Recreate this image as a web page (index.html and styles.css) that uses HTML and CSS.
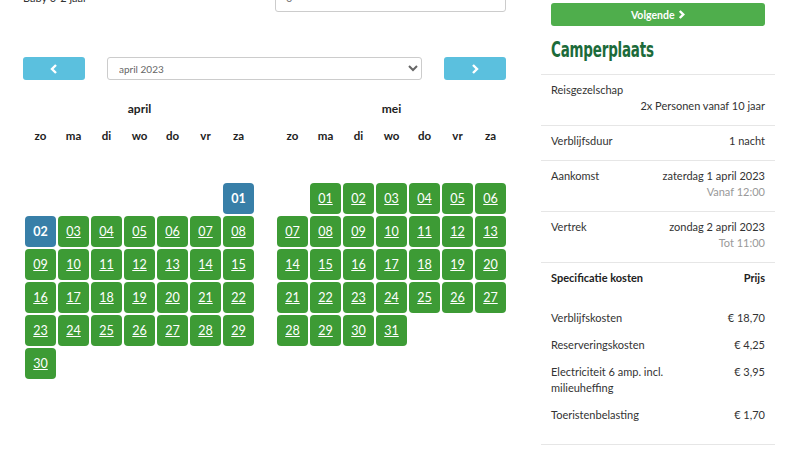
FILE: index.html
```html
<!DOCTYPE html>
<html lang="nl">
<head>
  <meta charset="UTF-8">
  <meta name="viewport" content="width=device-width, initial-scale=1.0">
  <title>Camperplaats reserveren</title>
  <link rel="stylesheet" href="styles.css">
</head>
<body>

  <div class="pagina">
    <main class="links">
      <div class="veld-rij">
        <label for="baby">Baby 0-2 jaar</label>
        <input type="text" id="baby" value="0">
      </div>

      <div class="maand-nav">
        <button class="nav-knop" aria-label="Vorige">
          <svg width="8" height="10" viewBox="0 0 8 10"><polyline points="6,1 2,5 6,9" fill="none" stroke="#fff" stroke-width="2.4"/></svg>
        </button>
        <select class="maand-keuze">
          <option>april 2023</option>
          <option>mei 2023</option>
        </select>
        <button class="nav-knop" aria-label="Volgende">
          <svg width="8" height="10" viewBox="0 0 8 10"><polyline points="2,1 6,5 2,9" fill="none" stroke="#fff" stroke-width="2.4"/></svg>
        </button>
      </div>

      <div class="maanden">
        <div class="maand" id="april">
          <h4>april</h4>
          <div class="dagnamen"><span>zo</span><span>ma</span><span>di</span><span>wo</span><span>do</span><span>vr</span><span>za</span></div>
          <div class="dagen"></div>
        </div>
        <div class="maand" id="mei">
          <h4>mei</h4>
          <div class="dagnamen"><span>zo</span><span>ma</span><span>di</span><span>wo</span><span>do</span><span>vr</span><span>za</span></div>
          <div class="dagen"></div>
        </div>
      </div>
    </main>

    <aside class="rechts">
      <button class="volgende">Volgende
        <svg width="7" height="9" viewBox="0 0 8 10"><polyline points="2,1 6,5 2,9" fill="none" stroke="#fff" stroke-width="2.8"/></svg>
      </button>
      <h2 class="titel"><span>Camperplaats</span></h2>

      <div class="regel">
        <div>Reisgezelschap</div>
        <div class="rechts-tekst">2x Personen vanaf 10 jaar</div>
      </div>
      <div class="regel naast">
        <div>Verblijfsduur</div>
        <div class="rechts-tekst">1 nacht</div>
      </div>
      <div class="regel naast">
        <div>Aankomst</div>
        <div class="rechts-tekst">zaterdag 1 april 2023<br><span class="grijs">Vanaf 12:00</span></div>
      </div>
      <div class="regel naast">
        <div>Vertrek</div>
        <div class="rechts-tekst">zondag 2 april 2023<br><span class="grijs">Tot 11:00</span></div>
      </div>

      <div class="kosten">
        <div class="kosten-kop"><span>Specificatie kosten</span><span>Prijs</span></div>
        <div class="kosten-regel"><span>Verblijfskosten</span><span>€ 18,70</span></div>
        <div class="kosten-regel"><span>Reserveringskosten</span><span>€ 4,25</span></div>
        <div class="kosten-regel"><span>Electriciteit 6 amp. incl. milieuheffing</span><span>€ 3,95</span></div>
        <div class="kosten-regel"><span>Toeristenbelasting</span><span>€ 1,70</span></div>
      </div>
    </aside>
  </div>

  <script>
    // dagen vullen: leeg = aantal lege vakjes voor de 1e
    function vulMaand(id, leeg, aantal, gekozen) {
      const dagen = document.querySelector('#' + id + ' .dagen');
      for (let i = 0; i < leeg; i++) {
        dagen.appendChild(document.createElement('span'));
      }
      for (let d = 1; d <= aantal; d++) {
        const a = document.createElement('a');
        a.href = '#';
        a.className = 'dag';
        if (gekozen.includes(d)) a.classList.add('gekozen');
        a.textContent = String(d).padStart(2, '0');
        dagen.appendChild(a);
      }
    }

    vulMaand('april', 6, 30, [1, 2]);
    vulMaand('mei', 1, 31, []);
  </script>

</body>
</html>
```

FILE: styles.css
```css
body {
  margin: 0;
  font-family: Lato, 'Open Sans', sans-serif;
  font-size: 11px;
  color: #333;
  background: #fff;
  overflow: hidden;
}

.pagina {
  display: flex;
  gap: 35px;
  padding: 0 25px 0 23px;
}

.links {
  width: 483px;
  flex: none;
}

.rechts {
  width: 234px;
  flex: none;
}

/* formulier bovenaan (half buiten beeld) */
.veld-rij {
  display: flex;
  justify-content: space-between;
  align-items: center;
  margin-top: -18px;
}

.veld-rij input {
  width: 231px;
  height: 30px;
  box-sizing: border-box;
  border: 1px solid #ccc;
  border-radius: 3px;
  padding: 0 10px;
  font-family: inherit;
  font-size: 11px;
  color: #777;
}

.maand-nav {
  display: flex;
  gap: 22px;
  margin-top: 45px;
  height: 23px;
}

.nav-knop {
  width: 62px;
  border: none;
  border-radius: 3px;
  background-color: #5bc0de;
  cursor: pointer;
  display: flex;
  align-items: center;
  justify-content: center;
  padding: 0;
}

.maand-keuze {
  flex: 1;
  border: 1px solid #ccc;
  border-radius: 3px;
  background: #fff;
  font-family: inherit;
  font-size: 10px;
  color: #666;
  padding: 0 7px;
}

.maanden {
  display: flex;
  gap: 23px;
  margin: 19px 0 0 2px;
}

.maand h4 {
  margin: 0;
  line-height: 20px;
  text-align: center;
  font-size: 12px;
  color: #222;
}

.dagnamen, .dagen {
  display: grid;
  grid-template-columns: repeat(7, 31px);
  gap: 2px;
}

.dagnamen {
  height: 33px;
  align-items: center;
  margin-bottom: 31px;
  font-size: 11.5px;
}

.dagnamen span {
  text-align: center;
  font-weight: bold;
  color: #222;
}

.dag {
  height: 31px;
  border-radius: 4px;
  background-color: #3d9b35;
  color: #fff;
  font-size: 12.5px;
  display: flex;
  align-items: center;
  justify-content: center;
}

.dag.gekozen {
  background-color: #387fa8;
  font-weight: bold;
  text-decoration: none;
}

/* rechterkolom */
.volgende {
  display: block;
  width: 214px;
  height: 23px;
  margin: 3px 10px 0;
  border: none;
  border-radius: 3px;
  background-color: #4fae4c;
  color: #fff;
  font-family: inherit;
  font-size: 10.5px;
  font-weight: bold;
  cursor: pointer;
}

.volgende svg {
  margin-left: 1px;
}

.titel {
  margin: 11px 10px 0;
  height: 37px;
  font-family: 'DejaVu Sans Condensed', sans-serif;
  font-weight: bold;
  font-size: 22px;
  line-height: 26px;
  color: #1c6b3a;
}

.titel span {
  display: inline-block;
  transform: scaleX(0.68);
  transform-origin: left center;
  letter-spacing: -0.3px;
}

.regel {
  border-top: 1px solid #e6e6e6;
  padding: 7px 10px 11px;
  line-height: 16px;
}

.regel.naast {
  display: flex;
  justify-content: space-between;
}

.rechts-tekst {
  text-align: right;
}

.grijs {
  color: #999;
}

.kosten {
  border-top: 1px solid #e6e6e6;
  border-bottom: 1px solid #e6e6e6;
  padding: 7px 10px 10px;
  line-height: 16px;
}

.kosten-kop {
  display: flex;
  justify-content: space-between;
  font-weight: bold;
  color: #222;
  margin-bottom: 24px;
}

.kosten-regel {
  display: flex;
  justify-content: space-between;
  gap: 20px;
  margin-bottom: 11px;
}

.kosten-regel span:first-child {
  max-width: 130px;
}
```
